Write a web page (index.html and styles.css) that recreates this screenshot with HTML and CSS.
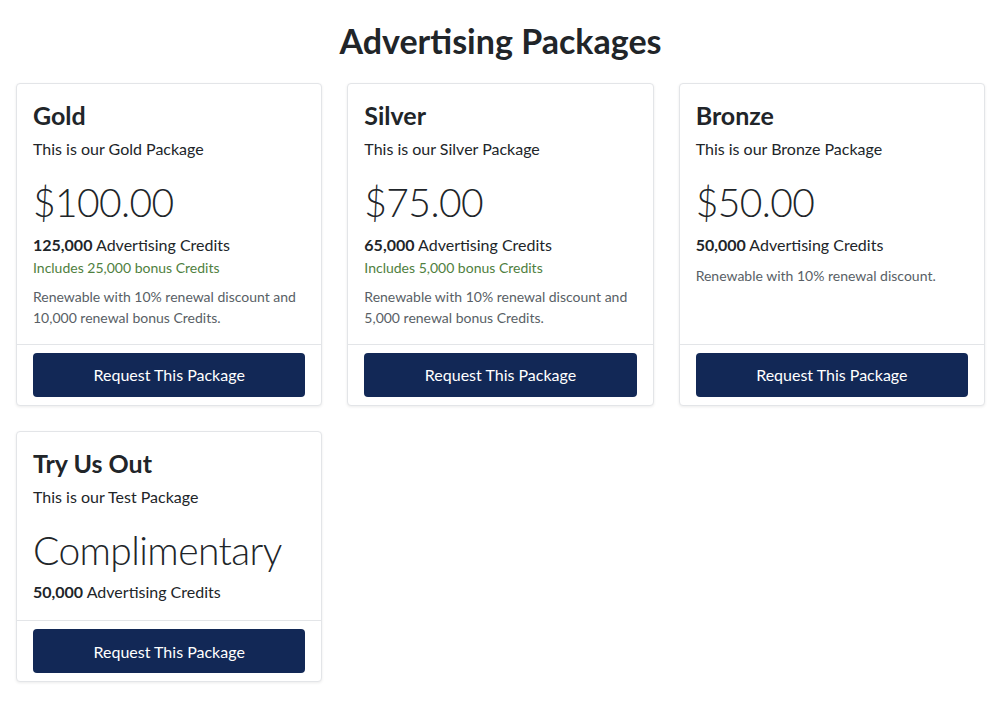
FILE: index.html
```html
<!DOCTYPE html>
<html lang="en">
<head>
    <meta charset="UTF-8">
    <meta name="viewport" content="width=device-width, initial-scale=1.0">
    <title>Advertising Packages</title>
    <link rel="stylesheet" href="styles.css">
</head>
<body>
    <div class="container">
        <h1 class="page-title">Advertising Packages</h1>

        <div class="package-grid">
            <div class="package-card">
                <div class="package-body">
                    <h2 class="package-name">Gold</h2>
                    <p class="package-desc">This is our Gold Package</p>
                    <div class="package-price">$100.00</div>
                    <p class="package-credits"><strong>125,000</strong> Advertising Credits</p>
                    <p class="package-bonus">Includes 25,000 bonus Credits</p>
                    <p class="package-renewal">Renewable with 10% renewal discount and 10,000 renewal bonus Credits.</p>
                </div>
                <div class="package-footer">
                    <button class="request-button">Request This Package</button>
                </div>
            </div>

            <div class="package-card">
                <div class="package-body">
                    <h2 class="package-name">Silver</h2>
                    <p class="package-desc">This is our Silver Package</p>
                    <div class="package-price">$75.00</div>
                    <p class="package-credits"><strong>65,000</strong> Advertising Credits</p>
                    <p class="package-bonus">Includes 5,000 bonus Credits</p>
                    <p class="package-renewal">Renewable with 10% renewal discount and 5,000 renewal bonus Credits.</p>
                </div>
                <div class="package-footer">
                    <button class="request-button">Request This Package</button>
                </div>
            </div>

            <div class="package-card">
                <div class="package-body">
                    <h2 class="package-name">Bronze</h2>
                    <p class="package-desc">This is our Bronze Package</p>
                    <div class="package-price">$50.00</div>
                    <p class="package-credits"><strong>50,000</strong> Advertising Credits</p>
                    <p class="package-renewal">Renewable with 10% renewal discount.</p>
                </div>
                <div class="package-footer">
                    <button class="request-button">Request This Package</button>
                </div>
            </div>

            <div class="package-card">
                <div class="package-body">
                    <h2 class="package-name">Try Us Out</h2>
                    <p class="package-desc">This is our Test Package</p>
                    <div class="package-price">Complimentary</div>
                    <p class="package-credits"><strong>50,000</strong> Advertising Credits</p>
                </div>
                <div class="package-footer">
                    <button class="request-button">Request This Package</button>
                </div>
            </div>
        </div>
    </div>
</body>
</html>
```

FILE: styles.css
```css
body {
    margin: 0;
    background-color: white;
    color: #212529;
    font-family: Lato, "Noto Sans", sans-serif;
    font-size: 16px;
    line-height: 1.5;
}

.container {
    padding: 21px 16px 20px;
}

.page-title {
    margin: 0 0 21px;
    text-align: center;
    font-size: 34px;
    font-weight: 700;
    line-height: 1.2;
}

.package-grid {
    display: grid;
    grid-template-columns: repeat(3, 1fr);
    gap: 25px;
}

.package-card {
    display: flex;
    flex-direction: column;
    border: 1px solid #e3e5e8;
    border-radius: 4px;
    background-color: white;
    box-shadow: 0 1px 3px rgba(0, 0, 0, 0.08);
}

.package-body {
    flex: 1;
    padding: 16px 16px 16px;
}

.package-name {
    margin: 0 0 7px;
    font-size: 25px;
    font-weight: 700;
    line-height: 1.2;
}

.package-desc {
    margin: 0;
}

.package-price {
    margin: 18px 0 7px;
    font-size: 39px;
    font-weight: 300;
    line-height: 1.2;
    letter-spacing: -0.6px;
}

.package-credits {
    margin: 0;
}

.package-bonus {
    margin: 0;
    font-size: 14px;
    color: #4f8040;
}

.package-renewal {
    margin: 8px 0 0;
    font-size: 14px;
    color: #595f66;
}

.package-footer {
    padding: 8px 16px;
    border-top: 1px solid #e3e5e8;
}

.request-button {
    display: block;
    width: 100%;
    height: 44px;
    border: none;
    border-radius: 4px;
    background-color: #122856;
    color: white;
    font-family: inherit;
    font-size: 16px;
    cursor: pointer;
}
```
